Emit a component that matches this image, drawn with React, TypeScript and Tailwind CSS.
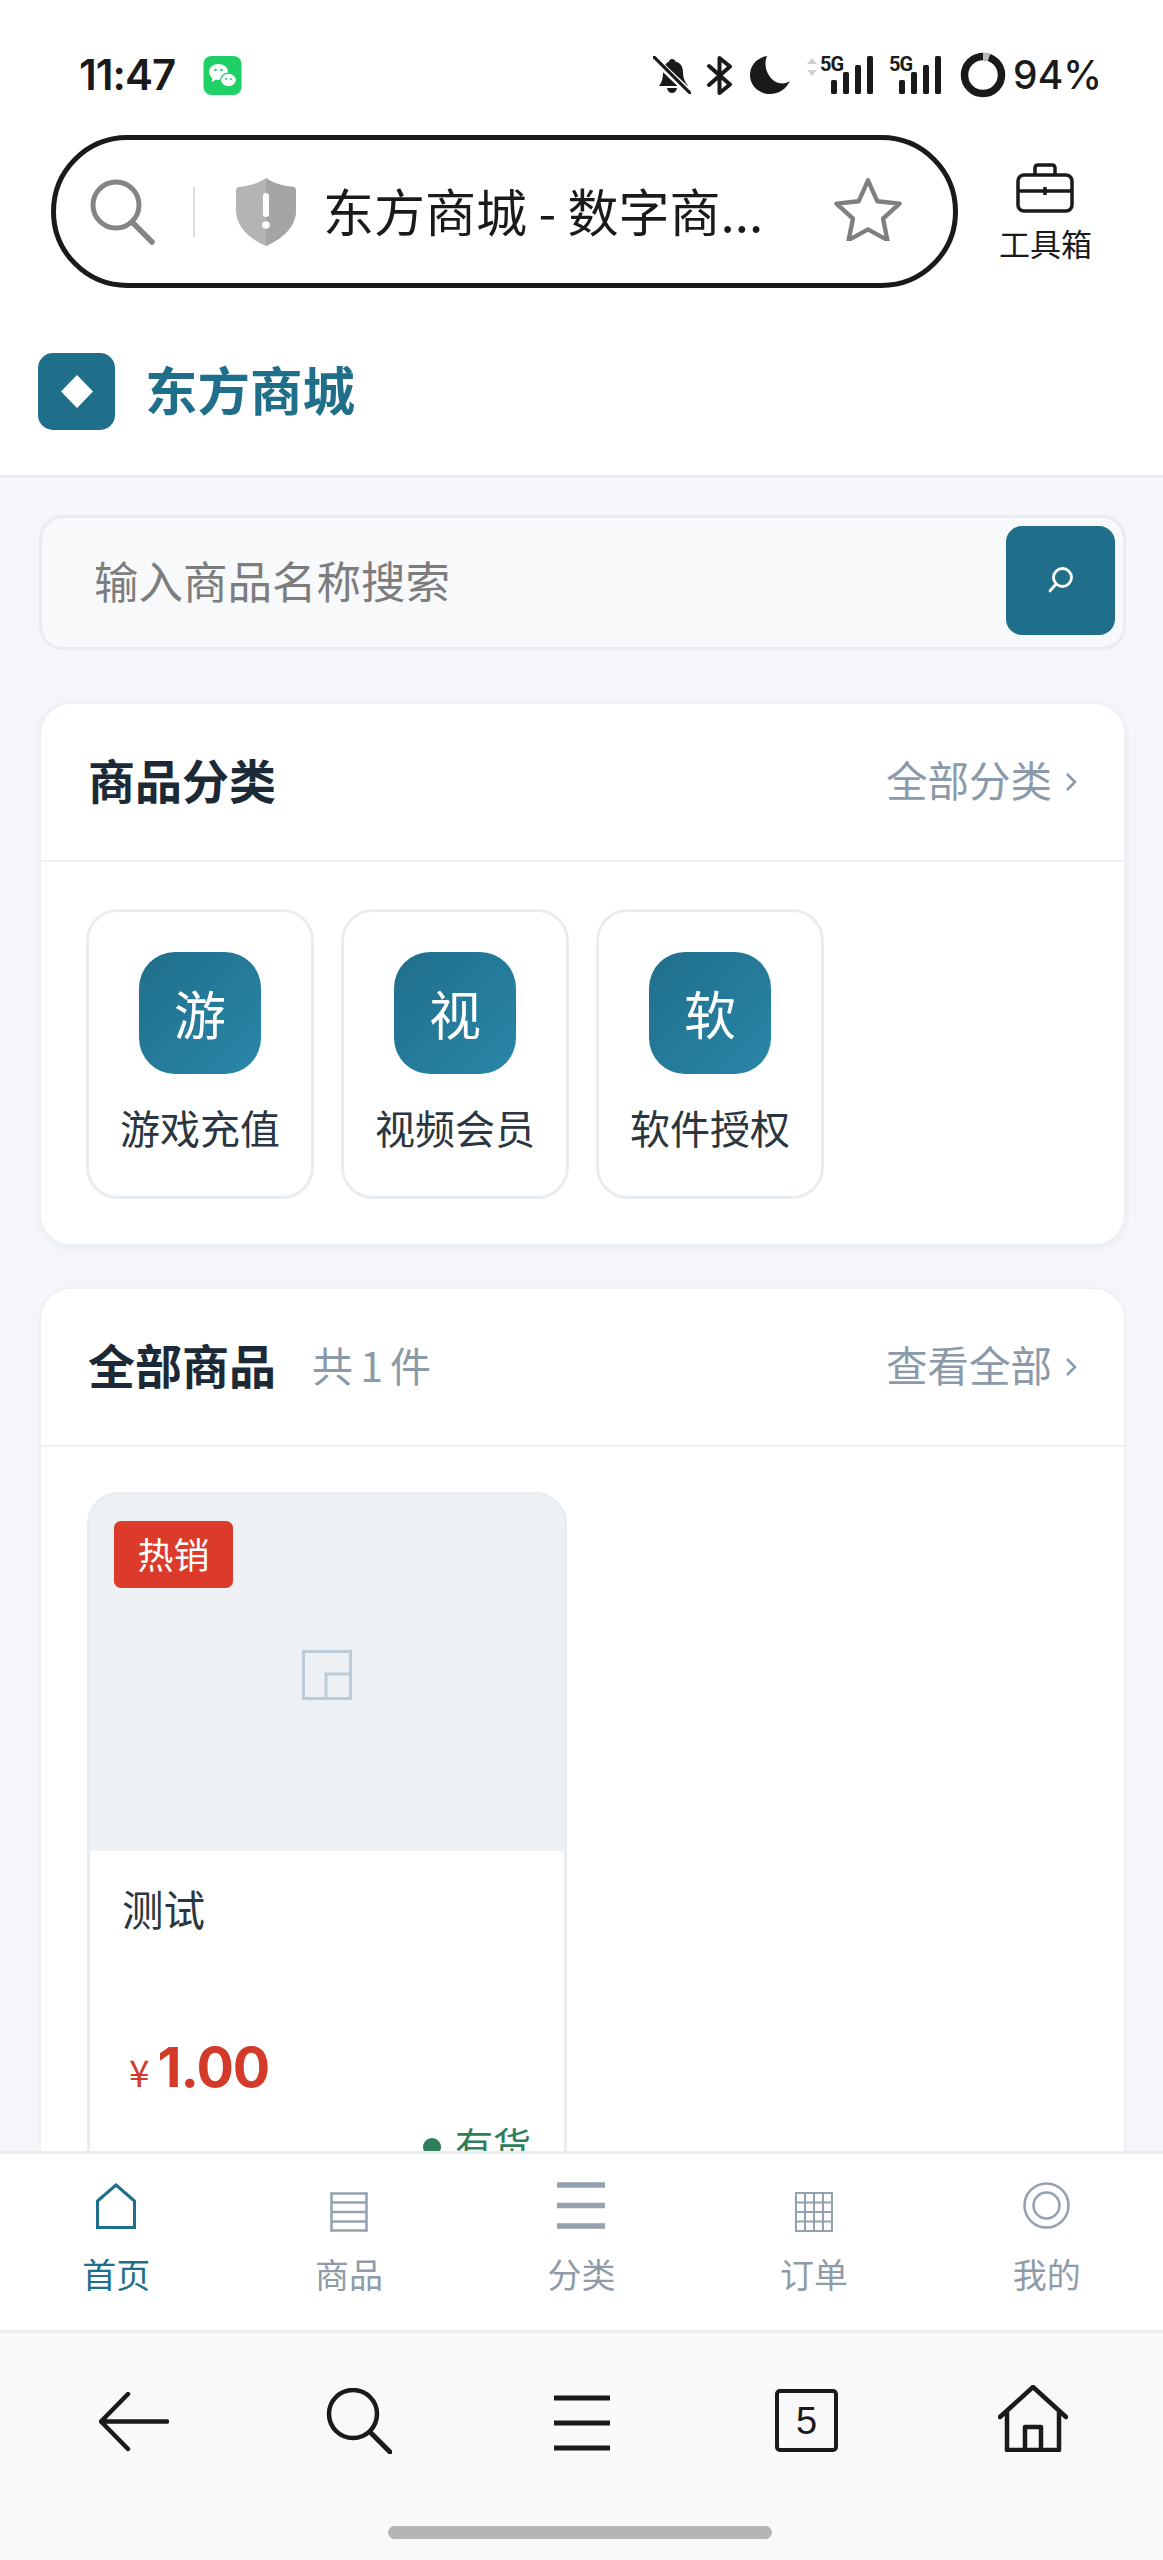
import React from 'react';

const CJK = { fontFamily: '"Noto Sans CJK SC", "Noto Sans", sans-serif' };

function Bars() {
  return (
    <svg width="42" height="38" viewBox="0 0 42 38" className="block">
      <rect x="0" y="24" width="6" height="14" rx="1.5" fill="#1a1a1a" />
      <rect x="12" y="16" width="6" height="22" rx="1.5" fill="#1a1a1a" />
      <rect x="24" y="9" width="6" height="29" rx="1.5" fill="#1a1a1a" />
      <rect x="36" y="0" width="6" height="38" rx="1.5" fill="#1a1a1a" />
    </svg>
  );
}

function StatusBar() {
  return (
    <div className="h-[135px] shrink-0 flex items-start justify-between pl-[79px] pr-[61px] pt-[52px] bg-white">
      <div className="flex items-center gap-[28px]">
        <span className="text-[42px] leading-[46px] font-semibold tracking-[-1px] text-[#1a1a1a] font-['Inter']">11:47</span>
        <svg width="39" height="39" viewBox="0 0 38 39">
          <rect width="38" height="39" rx="8" fill="#1fd066" />
          <ellipse cx="15" cy="16" rx="9.5" ry="8" fill="#fff" />
          <path d="M9 22l-1 4 5-2.5z" fill="#fff" />
          <ellipse cx="25" cy="24" rx="8" ry="6.8" fill="#fff" stroke="#1fd066" strokeWidth="1.2" />
          <circle cx="12" cy="14" r="1.3" fill="#1fd066" />
          <circle cx="18" cy="14" r="1.3" fill="#1fd066" />
          <circle cx="22.5" cy="23" r="1" fill="#1fd066" />
          <circle cx="27.5" cy="23" r="1" fill="#1fd066" />
        </svg>
      </div>
      <div className="flex items-center h-[46px]">
        <svg width="38" height="38" viewBox="0 0 38 38" className="mr-[16px]">
          <path d="M19 3c2 0 3 1 3.5 2.5C28 7 30 11 30 17c0 5 2 9 5 13H6c3-4 4-8 4-13 0-6 3-10 6-11.500C16.500 4 17 3 19 3z" fill="#1a1a1a" />
          <path d="M14 32h10c-.5 3-2.500 5-5 5s-4.500-2-5-5z" fill="#1a1a1a" />
          <path d="M-1 1L37 37" stroke="#fff" strokeWidth="7" />
          <path d="M1 1l36 36" stroke="#1a1a1a" strokeWidth="3.200" strokeLinecap="round" />
        </svg>
        <svg width="26" height="39" viewBox="0 0 26 39" className="mr-[17px]">
          <path d="M2 10l21 18.500L12.500 37V2L23 10.500 2 29" fill="none" stroke="#1a1a1a" strokeWidth="4" strokeLinejoin="round" strokeLinecap="round" />
        </svg>
        <svg width="40" height="38" viewBox="0 0 40 38" className="mr-[17px]">
          <path d="M17 0C6 2 0 10 0 19c0 11 9 19 20 19 9 0 16-5 20-13-3 2-7 3-11 2C20 25 12 12 17 0z" fill="#1a1a1a" />
        </svg>
        <div className="relative w-[67px] h-[38px] mr-[15px]">
          <svg width="10" height="20" viewBox="0 0 10 20" className="absolute left-0 top-[1px]">
            <path d="M5 1l5 6H0zM5 19l5-6H0z" fill="#d0d0d0" />
          </svg>
          <span className="absolute left-[13px] top-[-3px] text-[20px] leading-[22px] font-bold tracking-[-1px] text-[#1a1a1a] font-['Roboto']">5G</span>
          <div className="absolute left-[24px] top-0"><Bars /></div>
        </div>
        <div className="relative w-[52px] h-[38px] mr-[19px]">
          <span className="absolute left-0 top-[-3px] text-[20px] leading-[22px] font-bold tracking-[-1px] text-[#1a1a1a] font-['Roboto']">5G</span>
          <div className="absolute left-[10px] top-0"><Bars /></div>
        </div>
        <svg width="46" height="46" viewBox="0 0 46 46" className="mr-[7px]">
          <circle cx="23" cy="23" r="18.500" fill="none" stroke="#1a1a1a" strokeWidth="7.500" />
          <path d="M23 4.500A18.500 18.500 0 0 1 29 5.500" fill="none" stroke="#bdbdbd" strokeWidth="7.500" />
        </svg>
        <span className="text-[39px] leading-[46px] font-medium text-[#1a1a1a] font-['Inter']">94%</span>
      </div>
    </div>
  );
}

function BrowserBar() {
  return (
    <div className="h-[153px] shrink-0 flex bg-white pl-[51px]">
      <div className="w-[907px] h-[153px] rounded-full border-[5px] border-[#1a1a1a] flex items-center pl-[34px]">
        <svg width="66" height="66" viewBox="0 0 66 66">
          <circle cx="26" cy="26" r="23" fill="none" stroke="#858585" strokeWidth="5" />
          <path d="M43 44l19 19" stroke="#858585" strokeWidth="5.500" strokeLinecap="round" />
        </svg>
        <div className="w-[2px] h-[50px] bg-[#dcdcdc] ml-[37px] mr-[41px]" />
        <svg width="60" height="68" viewBox="0 0 60 68">
          <path d="M30 0c7 5 16 8 28 9 1 1 2 2 2 3v20c0 16-12 28-30 36C12 60 0 48 0 32V12c0-1 1-2 2-3C14 8 23 5 30 0z" fill="#b4b4b4" />
          <path d="M30 0c7 5 16 8 28 9 1 1 2 2 2 3v20c0 16-12 28-30 36z" fill="#a4a4a4" />
          <rect x="27" y="15" width="6" height="24" rx="3" fill="#fff" />
          <circle cx="30" cy="47" r="3.800" fill="#fff" />
        </svg>
        <span className="ml-[27px] mb-[3px] w-[492px] whitespace-nowrap text-[51px] leading-[60px] text-[#1a1a1a]" style={CJK}>东方商城 - 数字商...</span>
        <svg width="68" height="65" viewBox="0 0 70 66" className="ml-[19px] mb-[6px]">
          <path d="M35 4l9.500 21.500 23 2.500-17 15.500 4.500 22L35 54.500 15 65.500l4.500-22L2.500 28l23-2.500z" fill="none" stroke="#7f7f7f" strokeWidth="4.500" strokeLinejoin="round" />
        </svg>
      </div>
      <div className="flex-1 flex flex-col items-center pt-[28px] pr-[30px]">
        <svg width="58" height="50" viewBox="0 0 58 50" className="mr-[2px]">
          <path d="M19 12V5c0-2 1-3 3-3h14c2 0 3 1 3 3v7" fill="none" stroke="#1a1a1a" strokeWidth="3.500" />
          <rect x="2" y="12" width="54" height="36" rx="6" fill="none" stroke="#1a1a1a" strokeWidth="3.500" />
          <path d="M2 28h54M29 24v8" fill="none" stroke="#1a1a1a" strokeWidth="3.500" />
        </svg>
        <span className="mt-[11px] text-[31px] leading-[38px] text-[#1a1a1a] whitespace-nowrap" style={CJK}>工具箱</span>
      </div>
    </div>
  );
}

function SiteHeader() {
  return (
    <div className="h-[190px] shrink-0 bg-white border-b-[3px] border-[#e9edf1] flex items-start pl-[38px] pt-[65px]">
      <div className="w-[77px] h-[77px] rounded-[15px] bg-[#1f6f8b] flex items-center justify-center">
        <svg width="32" height="33" viewBox="0 0 32 33"><path d="M16 0l16 16.500L16 33 0 16.500z" fill="#fff" /></svg>
      </div>
      <span className="ml-[30px] mt-[3px] text-[52.500px] leading-[64px] font-bold text-[#1f6f8b]" style={CJK}>东方商城</span>
    </div>
  );
}

function SearchBox() {
  return (
    <div className="h-[135px] rounded-[24px] bg-[#f8f9fb] border-[3px] border-[#e8ecf1] flex items-center justify-between pl-[52px] pr-[8px] pb-[5px]">
      <span className="text-[44.5px] leading-[54px] text-[#7d7d7d]" style={CJK}>输入商品名称搜索</span>
      <div className="w-[109px] h-[109px] rounded-[16px] bg-[#1f6f8b] flex items-center justify-center">
        <svg width="28" height="28" viewBox="0 0 28 28">
          <circle cx="15.500" cy="11.500" r="9" fill="none" stroke="#fff" strokeWidth="2.800" />
          <path d="M9 18l-6 7" stroke="#fff" strokeWidth="2.800" strokeLinecap="round" />
        </svg>
      </div>
    </div>
  );
}

function Chevron() {
  return (
    <svg width="12" height="22" viewBox="0 0 12 22" className="ml-[13px] mt-[5px]">
      <path d="M2 3l8 8-8 8" fill="none" stroke="#8b9aa8" strokeWidth="2.500" />
    </svg>
  );
}

function CardHead({ title, note, link }: { title: string; note?: string; link: string }) {
  return (
    <div className="h-[158px] flex items-center justify-between pl-[47px] pr-[47px] pb-[6px] border-b-[2px] border-[#eef1f4]">
      <div className="flex items-center">
        <span className="text-[47px] leading-[60px] font-bold text-[#1b2a36]" style={CJK}>{title}</span>
        {note && <span className="ml-[36px] text-[41px] leading-[60px] text-[#8b9aa8] tracking-[-1px]" style={CJK}>{note}</span>}
      </div>
      <div className="flex items-center">
        <span className="text-[41.500px] leading-[60px] text-[#8b9aa8]" style={CJK}>{link}</span>
        <Chevron />
      </div>
    </div>
  );
}

function Tile({ glyph, label }: { glyph: string; label: string }) {
  return (
    <div className="w-[228px] h-[290px] rounded-[32px] border-[3px] border-[#e9edf1] bg-white flex flex-col items-center pt-[40px]">
      <div className="w-[122px] h-[122px] rounded-[36px] bg-gradient-to-br from-[#1f6f8b] to-[#2a86a8] flex items-center justify-center">
        <span className="text-[52px] leading-[64px] text-white" style={CJK}>{glyph}</span>
      </div>
      <span className="mt-[28px] text-[40px] leading-[50px] text-[#2a3640] whitespace-nowrap" style={CJK}>{label}</span>
    </div>
  );
}

function ProductCard() {
  return (
    <div className="relative w-[480px] h-[800px] rounded-[32px] border-[3px] border-[#e9edf1] bg-white overflow-hidden">
      <div className="h-[356px] bg-[#eef1f4] flex items-center justify-center pt-[4px]">
        <svg width="50" height="50" viewBox="0 0 50 50">
          <path d="M1.500 1.500h47v47h-47zM24 48.500V24h24.500" fill="none" stroke="#bccbd8" strokeWidth="3" />
        </svg>
      </div>
      <span className="absolute left-[24px] top-[26px] w-[119px] h-[67px] rounded-[7px] bg-[#dc3a2a] text-white text-[36px] leading-[65px] text-center" style={CJK}>热销</span>
      <div className="pl-[32px] pr-[33px] pt-[27px]">
        <div className="text-[41.500px] leading-[60px] text-[#2a3640]" style={CJK}>测试</div>
        <div className="mt-[93px] pl-[7px] flex items-baseline h-[72px]">
          <span className="text-[37px] leading-[72px] text-[#d33a2a] mr-[8px]" style={CJK}>¥</span>
          <span className="text-[55.500px] leading-[72px] font-bold text-[#d33a2a] tracking-[-1px] font-['Inter']">1.00</span>
        </div>
        <div className="mt-[11px] flex items-center justify-end">
          <span className="w-[18px] h-[18px] rounded-full bg-[#2e7d5b] mr-[14px] mt-[6px]" />
          <span className="text-[38px] leading-[60px] text-[#2e7d5b]" style={CJK}>有货</span>
        </div>
      </div>
    </div>
  );
}

function NavItem({ label, active, children }: { label: string; active?: boolean; children: React.ReactNode }) {
  return (
    <div className="flex flex-col items-center">
      <div className="h-[50px] flex items-end justify-center">{children}</div>
      <span className={`mt-[24px] text-[34px] leading-[42px] ${active ? 'text-[#1f6f8b]' : 'text-[#8f9ba8]'}`} style={CJK}>{label}</span>
    </div>
  );
}

function BottomNav() {
  const c = '#94a1ae';
  return (
    <div className="h-[179px] shrink-0 bg-white border-t-[3px] border-[#e9edf1] grid grid-cols-5 pt-[25px]">
      <NavItem label="首页" active>
        <svg width="42" height="46" viewBox="0 0 42 46">
          <path d="M21 2L39.500 18v26.500h-37V18z" fill="none" stroke="#1f6f8b" strokeWidth="3" />
          <path d="M2 44.500h38" stroke="#1f6f8b" strokeWidth="3" />
        </svg>
      </NavItem>
      <NavItem label="商品">
        <svg width="38" height="40" viewBox="0 0 38 40" className="mb-[-3px]">
          <path d="M1.500 1.500h35v37h-35zM1.500 10.500h35M1.500 20h35M1.500 29.500h35" fill="none" stroke={c} strokeWidth="2.500" />
        </svg>
      </NavItem>
      <NavItem label="分类">
        <svg width="48" height="47" viewBox="0 0 48 47">
          <path d="M0 3h48M0 23.500h48M0 44h48" stroke={c} strokeWidth="5.500" />
        </svg>
      </NavItem>
      <NavItem label="订单">
        <svg width="38" height="40" viewBox="0 0 38 40" className="mb-[-3px]">
          <path d="M1 1h36v38H1zM10 1v38M19 1v38M28 1v38M1 10.500h36M1 20h36M1 29.500h36" fill="none" stroke={c} strokeWidth="2" />
        </svg>
      </NavItem>
      <NavItem label="我的">
        <svg width="47" height="47" viewBox="0 0 47 47">
          <circle cx="23.500" cy="23.500" r="22" fill="none" stroke={c} strokeWidth="2.500" />
          <circle cx="23.500" cy="23.500" r="13" fill="none" stroke={c} strokeWidth="2.500" />
        </svg>
      </NavItem>
    </div>
  );
}

function BrowserBottom() {
  const k = '#1a1a1a';
  return (
    <div className="h-[230px] shrink-0 bg-[#f9f9f9] border-t-[3px] border-[#ececec] flex flex-col items-center">
      <div className="w-full h-[193px] pt-[52px] pl-[99px] flex items-start">
        <svg width="70" height="60" viewBox="0 0 70 60" className="mt-[7px]">
          <path d="M29 2L2 29.500 29 57M3 29.500h65" fill="none" stroke={k} strokeWidth="4.500" strokeLinecap="round" strokeLinejoin="round" />
        </svg>
        <svg width="66" height="66" viewBox="0 0 66 66" className="mt-[3px] ml-[157px]">
          <circle cx="27" cy="26" r="24" fill="none" stroke={k} strokeWidth="4.500" />
          <path d="M44 44l20 20" stroke={k} strokeWidth="5" strokeLinecap="round" />
        </svg>
        <svg width="56" height="56" viewBox="0 0 56 56" className="mt-[10px] ml-[162px]">
          <path d="M0 3h56M0 28h56M0 53h56" stroke={k} strokeWidth="5" />
        </svg>
        <div className="w-[63px] h-[63px] mt-[4px] ml-[165px] rounded-[5px] border-[4px] border-[#1a1a1a] flex items-center justify-center text-[38px] leading-none text-[#1a1a1a] font-['Liberation_Sans']">5</div>
        <svg width="70" height="67" viewBox="0 0 70 67" className="ml-[160px]">
          <path d="M2 32L35 2l33 30M9 27v38h52V27M27 65V42h16v23" fill="none" stroke={k} strokeWidth="4.500" strokeLinecap="round" strokeLinejoin="round" />
        </svg>
      </div>
      <div className="w-[384px] h-[13px] rounded-full bg-[#b5b5b5] mr-[3px]" />
    </div>
  );
}

export default function App() {
  return (
    <div className="w-[1163px] h-[2560px] flex flex-col overflow-hidden bg-[#f4f6f9]">
      <StatusBar />
      <BrowserBar />
      <SiteHeader />
      <main className="flex-1 min-h-0 overflow-hidden pl-[39px] pr-[37px] pt-[37px]">
        <SearchBox />
        <section className="mt-[52px] h-[544px] rounded-[32px] bg-white border-[2px] border-[#edf1f4] shadow-[0_2px_6px_rgba(30,60,90,0.06)]">
          <CardHead title="商品分类" link="全部分类" />
          <div className="flex gap-[27px] pl-[45px] pt-[47px]">
            <Tile glyph="游" label="游戏充值" />
            <Tile glyph="视" label="视频会员" />
            <Tile glyph="软" label="软件授权" />
          </div>
        </section>
        <section className="mt-[41px] h-[1000px] rounded-[32px] bg-white border-[2px] border-[#edf1f4]">
          <CardHead title="全部商品" note="共 1 件" link="查看全部" />
          <div className="pl-[46px] pt-[45px]">
            <ProductCard />
          </div>
        </section>
      </main>
      <BottomNav />
      <BrowserBottom />
    </div>
  );
}
